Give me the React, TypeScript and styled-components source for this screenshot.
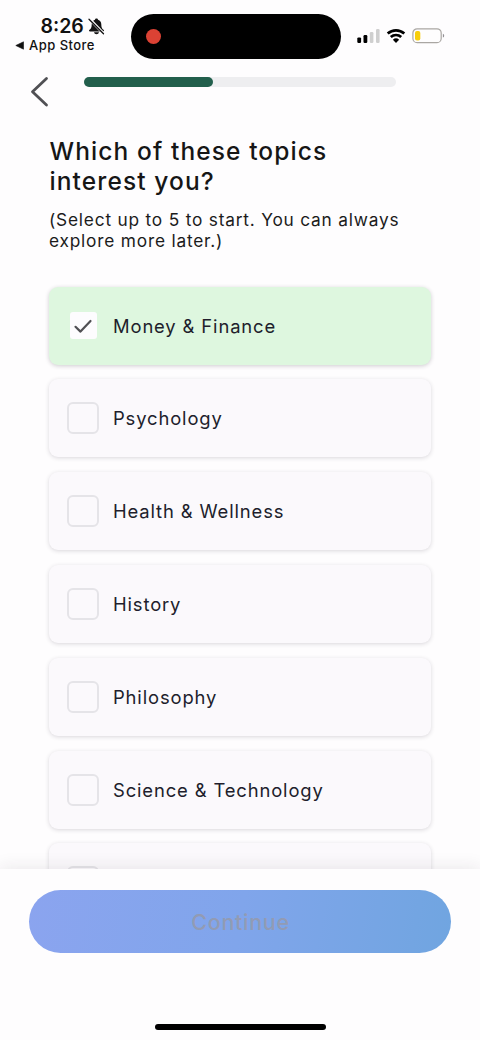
import React from "react";
import styled, { createGlobalStyle } from "styled-components";

const Global = createGlobalStyle`
  * { box-sizing: border-box; }
  body { margin: 0; background: #fefdfe; font-family: Inter, "Liberation Sans", sans-serif; }
  h1, p { margin: 0; font-weight: 400; }
`;
const Screen = styled.main`
  width: 480px; height: 1040px; overflow: hidden;
  display: flex; flex-direction: column; background: #fefdfe;
`;
const StatusBar = styled.div`
  height: 72px; flex: none; display: grid; grid-template-columns: 131px 210px 1fr;
`;
const Clock = styled.div`padding: 15px 0 0 15px;`;
const Time = styled.div`
  height: 22px; padding-left: 25.5px; display: flex; align-items: center; gap: 4px;
  font-size: 19.5px; line-height: 22px; font-weight: 600; letter-spacing: 0; color: #111;
`;
const StoreLink = styled.div`
  display: flex; align-items: center; gap: 5px; height: 16px;
  font-size: 13px; line-height: 16px; letter-spacing: 0.47px; font-weight: 450; color: #111;
`;
const Island = styled.div`
  height: 45px; margin-top: 14px; padding-left: 15px; border-radius: 23px; background: #000;
  display: flex; align-items: center;
`;
const RecordDot = styled.span`
  width: 15px; height: 15px; border-radius: 50%; background: #db4234;
`;
const StatusIcons = styled.div`padding: 28px 0 0 16px;`;
const NavBar = styled.header`
  height: 48px; flex: none; display: flex; align-items: flex-start; padding-left: 30px;
`;
const BackButton = styled.button`
  width: 20px; height: 32px; margin: 4px 34px 0 0; padding: 0; border: 0; background: none; display: block;
`;
const Track = styled.div`
  width: 312px; height: 10px; margin-top: 5px; border-radius: 5px; background: #eeeef0;
`;
const Progress = styled.div`width: 129px; height: 10px; border-radius: 5px; background: #225f4c;`;
const Content = styled.section`
  height: 749px; flex: none; overflow: hidden; padding: 17px 48.5px 0;
`;
const Title = styled.h1`
  padding-left: 1px; white-space: nowrap;
  font-size: 24.5px; line-height: 29.5px; font-weight: 500; letter-spacing: 1.1px; color: #161616;
`;
const Hint = styled.p`
  margin-top: 13px; padding-left: 0.5px; white-space: nowrap;
  font-size: 17.3px; line-height: 21px; letter-spacing: 0.8px; color: #1b1b1b;
`;
const Topics = styled.div`
  margin-top: 35.6px; display: flex; flex-direction: column; gap: 14.8px;
`;
const Topic = styled.label<{ $on?: boolean }>`
  width: 382.5px; height: 78px; flex: none; display: flex; align-items: center; gap: 14px; padding-left: 18.5px;
  border-radius: 9px; background: ${p => (p.$on ? "#def7df" : "#fbf9fc")};
  box-shadow: 0 1px 4px rgba(35, 30, 45, ${p => (p.$on ? 0.22 : 0.17)});
`;
const Box = styled.span<{ $on?: boolean }>`
  width: 32px; height: 32px; flex: none; display: flex; align-items: center; justify-content: center;
  border-radius: 6px; border: 2px solid #e5e4e8;
  ${p => p.$on && "width: 27px; height: 27px; margin: 0 2.5px; border: 0; border-radius: 3px; background: #fdfcfe;"}
`;
const TopicName = styled.span`
  font-size: 18.4px; line-height: 24px; letter-spacing: 0.87px; color: #211e2c; white-space: nowrap;
`;
const Footer = styled.footer`
  height: 171px; flex: none; position: relative; display: flex; flex-direction: column; align-items: center;
  padding-top: 21px; background: #fefdfe; box-shadow: 0 -2px 16px rgba(40, 35, 45, 0.09);
`;
const Continue = styled.button`
  width: 422px; height: 63px; padding: 0 0 0 1px; border: 0; border-radius: 32px;
  background: linear-gradient(100deg, #8ba4ef, #80a5eb 50%, #70a5e0);
  font: 500 21.5px/28px Inter, sans-serif; letter-spacing: 0.7px; color: #929bb4;
`;
const HomeBar = styled.div`
  width: 171px; height: 6px; margin-top: 71px; border-radius: 3px; background: #000;
`;

const BellOff = () => (
  <svg width="17" height="17" viewBox="0 0 17 17">
    <path d="M8.5 .5c-.9 0-1.4.5-1.5 1.2C4.800 2.300 3.700 4 3.700 6.400c0 3-.7 4.100-2.200 5.400-.9.800-.5 1.600.5 1.600h13c1 0 1.400-.8.500-1.600-1.500-1.300-2.200-2.400-2.200-5.400 0-2.400-1.100-4.100-3.300-4.700C9.900 1 9.400.5 8.500.5ZM6 14.200c.3 1.300 1.200 2 2.500 2s2.200-.7 2.500-2Z" fill="#111" />
    <path d="M1.300 .7 16 16" stroke="#fefdfe" strokeWidth="2.8" />
    <path d="M1 1.200 15.500 15.800" stroke="#111" strokeWidth="1.300" strokeLinecap="round" />
  </svg>
);

const Signals = () => (
  <svg width="90" height="16" viewBox="0 0 90 16">
    <g>
      <rect x="0.300" y="9.400" width="3.800" height="5.500" rx="1.200" fill="#000" />
      <rect x="6.500" y="7" width="3.800" height="7.900" rx="1.200" fill="#000" />
      <rect x="12.800" y="4" width="3.600" height="10.900" rx="1.200" fill="#cfcfcf" />
      <rect x="19" y="1" width="3.600" height="13.900" rx="1.200" fill="#cfcfcf" />
    </g>
    <g fill="none" stroke="#000" strokeWidth="2.700">
      <path d="M30.700 5.500a12.300 12.300 0 0 1 16.600 0" />
      <path d="M33.800 9a7.700 7.700 0 0 1 10.400 0" />
    </g>
    <path d="M35.900 11.700a4.500 4.500 0 0 1 6.200 0L39 14.900Z" fill="#000" />
    <rect x="55.900" y=".8" width="28.300" height="13.800" rx="4.200" fill="none" stroke="#aaa7a3" strokeWidth="1.200" />
    <rect x="58" y="2.900" width="5.300" height="9.500" rx="2" fill="#f8ce0b" />
    <path d="M85.900 5.800q1.300.6 1.300 1.900t-1.300 1.900Z" fill="#929094" />
  </svg>
);

const topics = [
  { name: "Money & Finance", on: true },
  { name: "Psychology" },
  { name: "Health & Wellness" },
  { name: "History" },
  { name: "Philosophy" },
  { name: "Science & Technology" },
  { name: "" },
];

export default function App() {
  return (
    <Screen>
      <Global />
      <StatusBar>
        <Clock>
          <Time>8:26<BellOff /></Time>
          <StoreLink>
            <svg width="9" height="9" viewBox="0 0 9 9"><path d="M.8 4.500 8.500 .8v7.400Z" fill="#111" stroke="#111" strokeWidth=".6" strokeLinejoin="round" /></svg>
            App Store
          </StoreLink>
        </Clock>
        <Island><RecordDot /></Island>
        <StatusIcons><Signals /></StatusIcons>
      </StatusBar>
      <NavBar>
        <BackButton aria-label="Back">
          <svg width="20" height="32" viewBox="0 0 20 32"><path d="M16.500 2.500 2.500 15.800l14 13.200" fill="none" stroke="#505054" strokeWidth="2.800" strokeLinecap="round" strokeLinejoin="round" /></svg>
        </BackButton>
        <Track><Progress /></Track>
      </NavBar>
      <Content>
        <Title>Which of these topics<br />interest you?</Title>
        <Hint>(Select up to 5 to start. You can always<br />explore more later.)</Hint>
        <Topics>
          {topics.map((t, i) => (
            <Topic key={i} $on={t.on}>
              <Box $on={t.on}>
                {t.on && <svg width="20" height="20" viewBox="0 0 20 20"><path d="m2.500 10.800 5 4.800L17.500 5" fill="none" stroke="#505054" strokeWidth="2.200" strokeLinecap="round" strokeLinejoin="round" /></svg>}
              </Box>
              <TopicName>{t.name}</TopicName>
            </Topic>
          ))}
        </Topics>
      </Content>
      <Footer>
        <Continue>Continue</Continue>
        <HomeBar />
      </Footer>
    </Screen>
  );
}
